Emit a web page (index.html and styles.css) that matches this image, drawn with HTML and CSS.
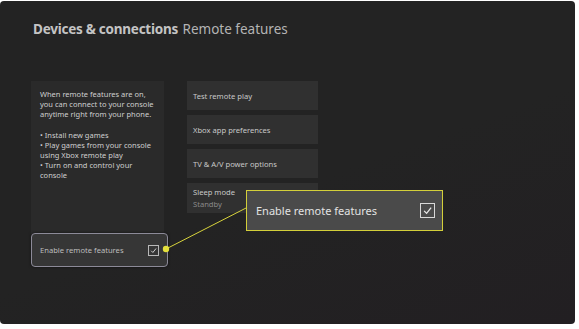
FILE: index.html
```html
<!DOCTYPE html>
<html lang="en">
<head>
    <meta charset="UTF-8">
    <meta name="viewport" content="width=device-width, initial-scale=1.0">
    <title>Devices &amp; connections - Remote features</title>
    <link rel="stylesheet" href="styles.css">
</head>
<body>
    <div class="screen">
        <header class="page-title">
            <span class="crumb">Devices &amp; connections</span>
            <span class="current">Remote features</span>
        </header>

        <div class="content">
            <section class="info-panel">
                <div class="info-text">
                    <p>When remote features are on, you can connect to your console anytime right from your phone.</p>
                    <ul>
                        <li>Install new games</li>
                        <li>Play games from your console using Xbox remote play</li>
                        <li>Turn on and control your console</li>
                    </ul>
                </div>
                <div class="toggle">
                    <span>Enable remote features</span>
                    <span class="check small">
                        <svg viewBox="0 0 10 10"><path d="M2.4 5.3 L4.3 7.2 L7.8 2.8" /></svg>
                    </span>
                </div>
            </section>

            <section class="options">
                <div class="tile">Test remote play</div>
                <div class="tile">Xbox app preferences</div>
                <div class="tile">TV &amp; A/V power options</div>
                <div class="tile double">
                    <span>Sleep mode</span>
                    <span class="sub">Standby</span>
                </div>
            </section>
        </div>

        <!-- zoomed callout -->
        <svg class="leader" width="575" height="323">
            <line x1="166" y1="248" x2="248" y2="206" />
            <circle cx="166" cy="248" r="3.2" />
        </svg>
        <div class="callout">
            <span>Enable remote features</span>
            <span class="check big">
                <svg viewBox="0 0 10 10"><path d="M2.4 5.3 L4.3 7.2 L7.8 2.8" /></svg>
            </span>
        </div>
    </div>
</body>
</html>
```

FILE: styles.css
```css
body {
    margin: 0;
    background: #fff;
    font-family: "Noto Sans", "Open Sans", sans-serif;
}
.screen {
    position: relative;
    width: 575px;
    height: 323px;
    margin-top: 1px;
    border-radius: 4px;
    background: linear-gradient(160deg, #232323 55%, #221f22 100%);
    overflow: hidden;
}
.page-title {
    padding: 18px 0 0 33px;
    font-size: 13.5px;
    line-height: 20px;
    white-space: nowrap;
}
.crumb {
    font-weight: bold;
    color: #c4c4c4;
    letter-spacing: -0.25px;
}
.current {
    color: #b4b4b4;
    margin-left: 1px;
}
.content {
    display: flex;
    gap: 23px;
    padding: 42px 0 0 31px;
}
.info-panel {
    width: 133px;
    height: 182px;
    background: #2a2a2a;
    display: flex;
    flex-direction: column;
    justify-content: space-between;
}
.info-text {
    padding: 8px 8px 0 9px;
    color: #cfcfcf;
    font-size: 7.5px;
    line-height: 10px;
}
.info-text p {
    margin: 0 0 11px;
}
.info-text ul {
    margin: 0;
    padding: 0;
    list-style: none;
}
.info-text li::before {
    content: "\2022  ";
    white-space: pre;
}
.toggle {
    box-sizing: border-box;
    width: 137px;
    height: 34px;
    margin-bottom: -4px;
    border: 1.5px solid #8c8a98;
    border-radius: 4px;
    background: #363636;
    display: flex;
    align-items: center;
    justify-content: space-between;
    padding: 0 8px 0 8px;
    color: #bdbdbd;
    font-size: 7.6px;
    box-shadow: 0 0 3px rgba(0, 0, 0, 0.6);
}
.check {
    display: flex;
    border: 1.2px solid #b8b8b8;
}
.check svg {
    width: 100%;
    height: 100%;
}
.check path {
    fill: none;
    stroke: #d0d0d0;
    stroke-width: 1.1;
}
.check.small {
    width: 9px;
    height: 9px;
}
.check.big {
    width: 13px;
    height: 13px;
    border-width: 1.5px;
    border-color: #d8d8d8;
}
.check.big path {
    stroke: #e8e8e8;
    stroke-width: 1;
}
.options {
    width: 131px;
    display: flex;
    flex-direction: column;
    gap: 5px;
}
.tile {
    height: 29px;
    background: #303030;
    color: #c8c8c8;
    font-size: 7.6px;
    display: flex;
    align-items: center;
    padding-left: 6px;
}
.tile.double {
    height: 30px;
    flex-direction: column;
    align-items: flex-start;
    justify-content: center;
    gap: 2px;
}
.tile .sub {
    color: #8a8a8a;
}
.leader {
    position: absolute;
    top: 0;
    left: 0;
}
.leader line {
    stroke: #d8d43c;
    stroke-width: 1;
}
.leader circle {
    fill: #e4e03c;
}
.callout {
    box-sizing: border-box;
    position: absolute;
    left: 246px;
    top: 189px;
    width: 197px;
    height: 41px;
    padding: 0 7px 0 9px;
    border: 1.5px solid #d3cf3a;
    background: #4a4a4a;
    display: flex;
    align-items: center;
    justify-content: space-between;
    color: #e2e2e2;
    font-size: 11px;
}
```
